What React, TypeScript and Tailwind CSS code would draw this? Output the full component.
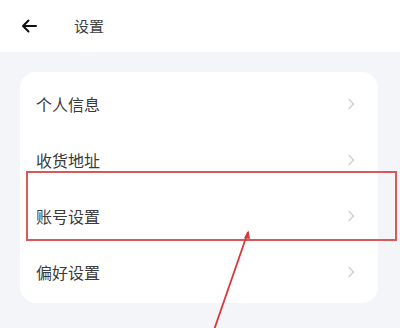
const rows = ['个人信息', '收货地址', '账号设置', '偏好设置'];

function Chevron() {
  return (
    <svg width="8" height="12" viewBox="0 0 8 12" fill="none">
      <path d="M2 1.5L6.5 6L2 10.5" stroke="#d2d2d2" strokeWidth="1.6" strokeLinecap="round" strokeLinejoin="round" />
    </svg>
  );
}

export default function App() {
  return (
    <div
      className="relative h-[328px] w-[400px] overflow-hidden bg-[#f4f5f9] text-[#3a3a3a]"
      style={{ fontFamily: '"Noto Sans CJK SC", "Noto Sans", sans-serif' }}
    >
      <div className="flex h-[52px] items-center bg-white pl-[21px]">
        <svg width="16" height="14" viewBox="0 0 16 14" fill="none">
          <path d="M15 7H2M7.5 1.5L2 7l5.5 5.5" stroke="#111" strokeWidth="2" strokeLinecap="round" strokeLinejoin="round" />
        </svg>
        <span className="ml-[37px] text-[15px] text-[#3f3f3f]">设置</span>
      </div>

      <div className="px-[20px] pt-[20px]">
        <div className="flex w-[358px] flex-col rounded-[16px] bg-white pb-[3px] pt-[4px]">
          {rows.map((r) => (
            <div key={r} className="flex h-[56px] items-center justify-between pl-[16px] pr-[23px]">
              <span className="text-[16px] leading-none">{r}</span>
              <Chevron />
            </div>
          ))}
        </div>
      </div>

      <div className="absolute left-[26px] top-[171px] h-[70px] w-[371px] border-2 border-[#d9585b]" />
      <svg className="absolute left-0 top-0" width="400" height="328" viewBox="0 0 400 328">
        <path d="M248 232L214 330" stroke="#d6383c" strokeWidth="1.8" />
        <path d="M244 238L248.5 230.5L250 239Z" fill="#d6383c" />
      </svg>
    </div>
  );
}
